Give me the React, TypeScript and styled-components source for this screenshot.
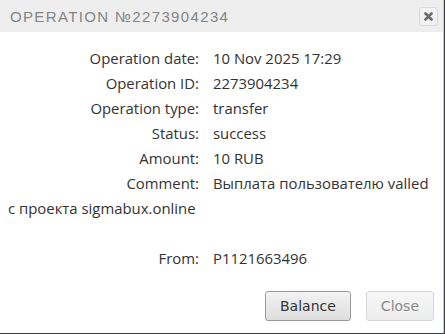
import { createGlobalStyle } from 'styled-components'
import styled from 'styled-components'

const GlobalStyle = createGlobalStyle`
  html, body {
    margin: 0;
    padding: 0;
    background: #ffffff;
  }
`

const Frame = styled.div`
  width: 445px;
  height: 334px;
  box-sizing: border-box;
  border-right: 1px solid #3a3f44;
  border-bottom: 1px solid #3a3f44;
  overflow: hidden;
`

const Dialog = styled.div`
  height: 100%;
  box-sizing: border-box;
  border-right: 1px solid #c8c8c8;
  display: flex;
  flex-direction: column;
  background: #ffffff;
`

const TitleBar = styled.div`
  height: 32px;
  background: #eeeeee;
  display: flex;
  align-items: center;
  justify-content: space-between;
  padding: 0 5px 0 10px;
  box-sizing: border-box;
`

const Title = styled.span`
  font-family: 'Liberation Sans', sans-serif;
  font-size: 15px;
  letter-spacing: 1.35px;
  color: #858585;
  margin-top: 1px;
`

const CloseIcon = styled.button`
  width: 19px;
  height: 19px;
  padding: 0;
  margin-top: 1px;
  border: 1px solid #dadada;
  border-radius: 3px;
  background: #f2f2f2;
  display: flex;
  align-items: center;
  justify-content: center;
`

const Content = styled.div`
  flex: 1;
  padding: 14px 8px 0;
  font-family: 'Open Sans', 'Lato', sans-serif;
  font-size: 14.9px;
  color: #333333;
`

const Row = styled.div`
  display: grid;
  grid-template-columns: 191px 1fr;
  column-gap: 14px;
  height: 25px;
  line-height: 25px;
  white-space: nowrap;
`

const Label = styled.span`
  text-align: right;
`

const Value = styled.span``

const Line = styled.div<{ $gap?: number }>`
  height: 25px;
  line-height: 25px;
  margin-bottom: ${p => p.$gap ?? 0}px;
`

const ButtonPane = styled.div`
  display: flex;
  justify-content: flex-end;
  gap: 15px;
  padding: 0 9px 12px 0;
`

const Button = styled.button<{ $disabled?: boolean }>`
  height: 30px;
  padding: 0 14px;
  border-radius: 3px;
  border: 1px solid ${p => (p.$disabled ? '#d6d6d6' : '#9a9a9a')};
  background: ${p =>
    p.$disabled
      ? 'linear-gradient(#f7f7f7, #ededed)'
      : 'linear-gradient(#f3f3f3, #dedede)'};
  color: ${p => (p.$disabled ? '#8a8a8a' : '#333333')};
  font-family: 'DejaVu Sans', sans-serif;
  font-size: 14px;
  min-width: ${p => (p.$disabled ? 68 : 85)}px;
`

const rows: [string, string][] = [
  ['Operation date:', '10 Nov 2025 17:29'],
  ['Operation ID:', '2273904234'],
  ['Operation type:', 'transfer'],
  ['Status:', 'success'],
  ['Amount:', '10 RUB'],
  ['Comment:', 'Выплата пользователю valled'],
]

export default function App() {
  return (
    <>
      <GlobalStyle />
      <Frame>
        <Dialog>
          <TitleBar>
            <Title>OPERATION №2273904234</Title>
            <CloseIcon>
              <svg width="9" height="9" viewBox="0 0 9 9">
                <path
                  d="M1.5 1.5 L7.5 7.5 M7.5 1.5 L1.5 7.5"
                  stroke="#6a6a6a"
                  strokeWidth="2.6"
                  strokeLinecap="round"
                />
              </svg>
            </CloseIcon>
          </TitleBar>
          <Content>
            {rows.map(([label, value]) => (
              <Row key={label}>
                <Label>{label}</Label>
                <Value>{value}</Value>
              </Row>
            ))}
            <Line $gap={25}>с проекта sigmabux.online</Line>
            <Row>
              <Label>From:</Label>
              <Value>P1121663496</Value>
            </Row>
          </Content>
          <ButtonPane>
            <Button>Balance</Button>
            <Button $disabled>Close</Button>
          </ButtonPane>
        </Dialog>
      </Frame>
    </>
  )
}
